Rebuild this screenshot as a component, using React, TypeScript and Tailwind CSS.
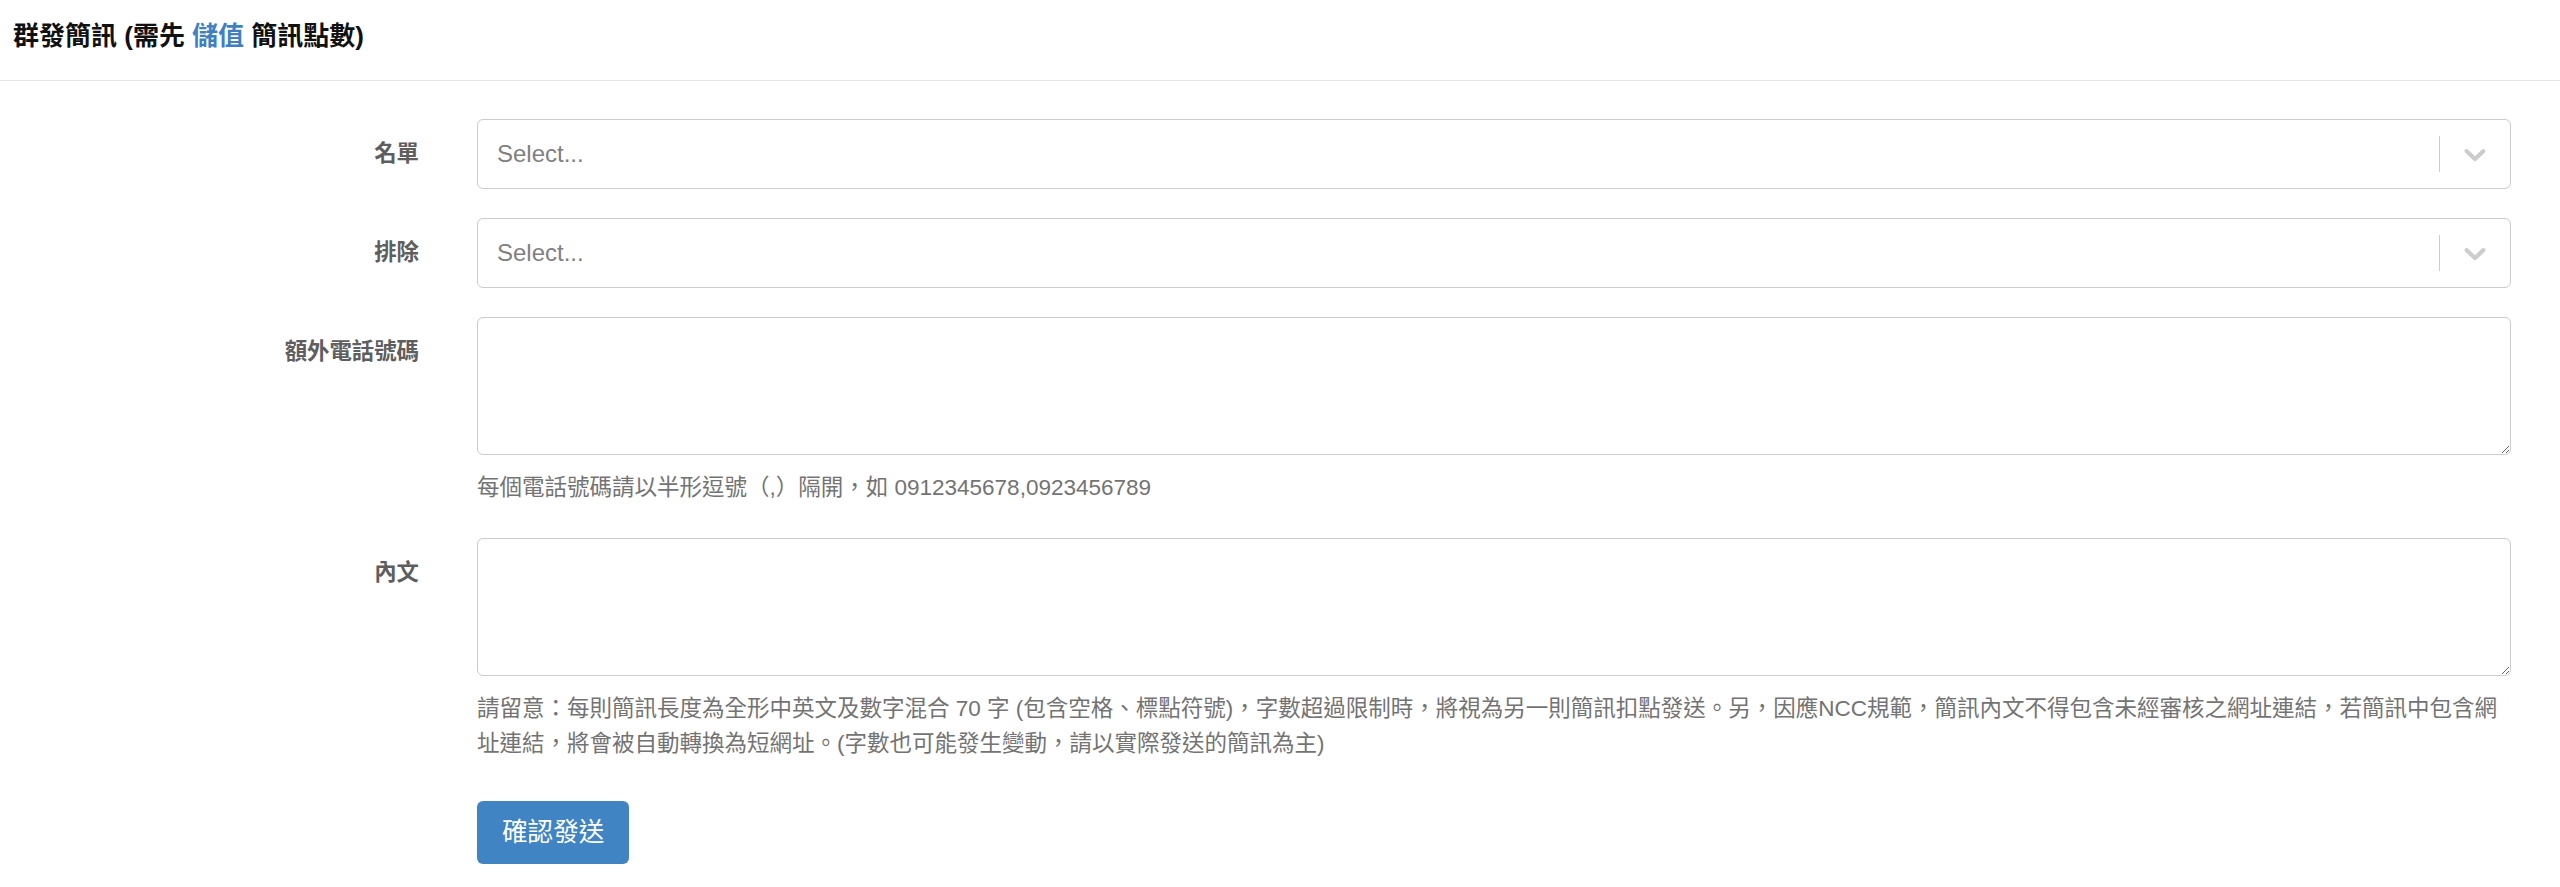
import React from "react";

const FONT = '"Liberation Sans", "Noto Sans CJK TC", sans-serif';

function Chevron() {
  return (
    <svg width="36" height="36" viewBox="0 0 20 20" fill="#cccccc" aria-hidden="true">
      <path d="M4.516 7.548c0.436-0.446 1.043-0.481 1.576 0l3.908 3.747 3.908-3.747c0.533-0.481 1.141-0.446 1.574 0 0.436 0.445 0.408 1.197 0 1.615-0.406 0.418-4.695 4.502-4.695 4.502-0.217 0.223-0.502 0.335-0.787 0.335s-0.57-0.112-0.789-0.335c0 0-4.287-4.084-4.695-4.502s-0.436-1.17 0-1.615z" />
    </svg>
  );
}

function SelectBox() {
  return (
    <div className="flex h-[70px] items-center rounded-[6px] border border-[#cccccc] bg-white">
      <div className="flex-1 pl-[19px] text-[24px] text-[#808080]">Select...</div>
      <div className="flex h-full items-center">
        <span className="h-[36px] w-px bg-[#cccccc]" />
        <div className="flex items-center px-[17px]">
          <Chevron />
        </div>
      </div>
    </div>
  );
}

function Label({ children }: { children: React.ReactNode }) {
  return (
    <div className="w-[419px] shrink-0 pt-[19px] text-right text-[22.4px] font-bold leading-[32px] text-[#5e5e5e]">
      {children}
    </div>
  );
}

export default function App() {
  return (
    <div className="min-h-screen bg-white" style={{ fontFamily: FONT }}>
      <div className="h-[81px] border-b border-[#e5e5e5] px-[13px] pt-[18px]">
        <div className="text-[26px] font-bold leading-[36px] text-[#111111]">
          群發簡訊 (需先 <span className="text-[#3f7fc2]">儲值</span> 簡訊點數)
        </div>
      </div>

      <div className="flex flex-col pr-[49px] pt-[38px]">
        <div className="flex gap-[58px]">
          <Label>名單</Label>
          <div className="flex-1">
            <SelectBox />
          </div>
        </div>

        <div className="mt-[29px] flex gap-[58px]">
          <Label>排除</Label>
          <div className="flex-1">
            <SelectBox />
          </div>
        </div>

        <div className="mt-[29px] flex gap-[58px]">
          <Label>額外電話號碼</Label>
          <div className="flex-1">
            <textarea className="block h-[138px] w-full rounded-[6px] border border-[#cccccc] bg-white px-[19px] py-[10px] text-[22.4px] outline-none" />
            <div className="mt-[15px] text-[22.5px] leading-[35px] text-[#737373]">
              每個電話號碼請以半形逗號（,）隔開，如 0912345678,0923456789
            </div>
          </div>
        </div>

        <div className="mt-[33px] flex gap-[58px]">
          <Label>內文</Label>
          <div className="flex-1">
            <textarea className="block h-[138px] w-full rounded-[6px] border border-[#cccccc] bg-white px-[19px] py-[10px] text-[22.4px] outline-none" />
            <div className="mt-[15px] text-[22.5px] leading-[35px] text-[#737373]">
              請留意：每則簡訊長度為全形中英文及數字混合 70 字 (包含空格、標點符號)，字數超過限制時，將視為另一則簡訊扣點發送。另，因應NCC規範，簡訊內文不得包含未經審核之網址連結，若簡訊中包含網址連結，將會被自動轉換為短網址。(字數也可能發生變動，請以實際發送的簡訊為主)
            </div>
            <button
              type="button"
              className="mt-[40px] flex h-[63px] items-center rounded-[6px] bg-[#4084c3] px-[25px] text-[25.6px] text-white"
            >
              確認發送
            </button>
          </div>
        </div>
      </div>
    </div>
  );
}
